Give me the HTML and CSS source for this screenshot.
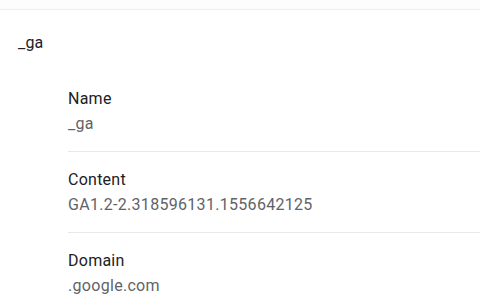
FILE: index.html
```html
<!DOCTYPE html>
<html>
<head>
<meta charset="utf-8">
<link rel="stylesheet" href="styles.css">
</head>
<body>
<div class="topbar"></div>
<div class="header">_ga</div>
<div class="list">
  <div class="item">
    <div class="label">Name</div>
    <div class="value">_ga</div>
  </div>
  <div class="item">
    <div class="label">Content</div>
    <div class="value">GA1.2-2.318596131.1556642125</div>
  </div>
  <div class="item">
    <div class="label">Domain</div>
    <div class="value">.google.com</div>
  </div>
</div>
</body>
</html>
```
FILE: styles.css
```css
html, body {
  margin: 0;
  padding: 0;
  background: #ffffff;
  font-family: Roboto, "Noto Sans", sans-serif;
  font-size: 16px;
  line-height: 20px;
}
.topbar {
  height: 9px;
  background: #fdfdfd;
  border-bottom: 1px solid #eeeeee;
}
.header {
  padding: 23px 0 18px 18px;
  color: #202124;
  letter-spacing: 0.2px;
}
.list {
  margin-left: 68px;
}
.item {
  padding: 18px 0 17px 0;
  border-bottom: 1px solid #e8e8e8;
}
.label {
  color: #202124;
  letter-spacing: 0.25px;
}
.value {
  margin-top: 5px;
  color: #5f6368;
  letter-spacing: 0.3px;
}
```
